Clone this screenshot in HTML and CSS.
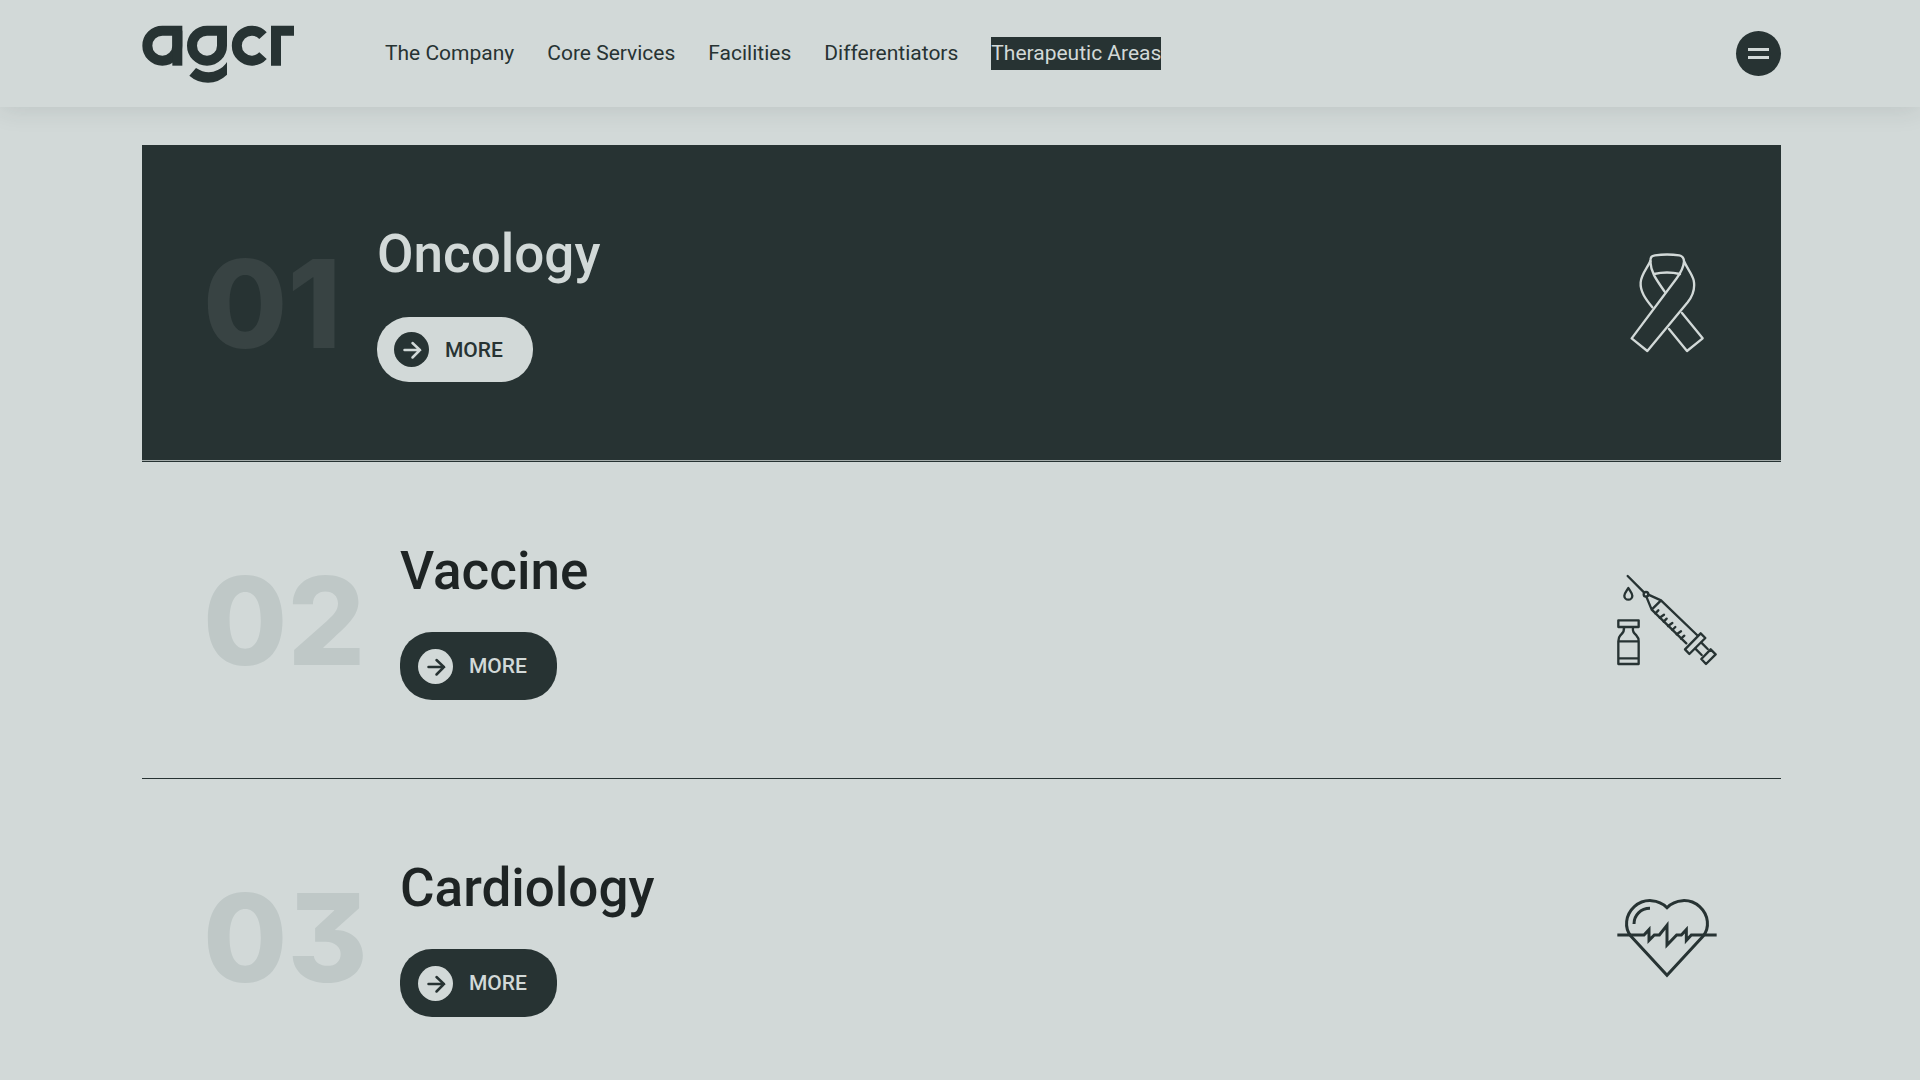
FILE: index.html
```html
<!DOCTYPE html>
<html lang="en">
<head>
<meta charset="utf-8">
<meta name="viewport" content="width=device-width, initial-scale=1">
<title>agcr - Therapeutic Areas</title>
<link rel="stylesheet" href="styles.css">
</head>
<body>

<header class="header">
  <a class="logo" href="#" aria-label="agcr">
    <svg viewBox="36 44 456 172" width="152" height="58" fill="none" stroke="currentColor" stroke-width="30">
      <path d="M97 60A45 45 0 0 0 97 150A45 45 0 0 0 142 105V60Z"/>
      <path d="M142 60V165"/>
      <path d="M231 60A45 45 0 0 0 231 150A45 45 0 0 0 276 105V60Z"/>
      <path d="M198 172Q232 194 263 178Q281 170 291 154V192Q266 216 234 216Q202 216 178 195Z" fill="currentColor" stroke="none"/>
      <path d="M399 75A45 45 0 1 0 399 135"/>
      <path d="M438 165V60H492"/>
    </svg>
  </a>
  <nav class="nav">
    <a href="#">The Company</a>
    <a href="#">Core Services</a>
    <a href="#">Facilities</a>
    <a href="#">Differentiators</a>
    <a href="#" class="active">Therapeutic Areas</a>
  </nav>
  <button class="menu" type="button" aria-label="Menu"><span></span><span></span></button>
</header>

<main class="areas">
  <section class="area active">
    <span class="number">01</span>
    <div class="info">
      <h2>Oncology</h2>
      <a class="more" href="#">
        <svg class="arrow" viewBox="0 0 35 35"><circle cx="17.5" cy="17.5" r="17.5"/><path d="M10.5 18H26M18.5 11L26 18L18.5 25.5"/></svg>
        MORE
      </a>
    </div>
    <svg class="icon light" viewBox="50 40 300 300">
      <path d="M150 66C150 51 154 49 164 47Q200 42 237 47C247 49 251 54 251 66C249 88 241 100 228 117L94 296L141 334L262 188C280 165 285 147 280 122C275 102 261 88 251 64"/>
      <path d="M150 64C142 84 123 103 121 128C119 155 135 177 156 203"/>
      <path d="M150 66C152 100 169 121 193 156M161 103Q200 94 239 103"/>
      <path d="M245 220L307 296L260 334L206 268"/>
    </svg>
  </section>

  <section class="area">
    <span class="number">02</span>
    <div class="info">
      <h2>Vaccine</h2>
      <a class="more" href="#">
        <svg class="arrow" viewBox="0 0 35 35"><circle cx="17.5" cy="17.5" r="17.5"/><path d="M10.5 18H26M18.5 11L26 18L18.5 25.5"/></svg>
        MORE
      </a>
    </div>
    <svg class="icon" viewBox="50 30 300 300">
      <path d="M82 48L131 97"/>
      <circle cx="137" cy="103" r="7"/>
      <path d="M144 104L182 121L290 225M138 110L154 149L258 250M182 121L154 149"/>
      <path d="M165 160L174 151M178 173L191 164M190 185L199 176M203 198L216 189M216 210L225 201M229 223L242 214M242 236L252 227"/>
      <path d="M301 220L315 234L267 282L254 268Z"/>
      <path d="M303 248L322 267M285 266L304 285M331 268L346 283L317 312L303 297Z"/>
      <path d="M84 84C78 94 72 100 72 107A12 12 0 0 0 96 107C96 100 90 94 84 84Z"/>
      <path d="M54 181H115V201H54ZM71 202C73 215 67 219 60 226C55 231 54 237 54 244V312H115V244C115 237 113 231 108 226C101 219 96 215 98 202M54 244H115M54 295H115"/>
    </svg>
  </section>

  <section class="area">
    <span class="number">03</span>
    <div class="info">
      <h2>Cardiology</h2>
      <a class="more" href="#">
        <svg class="arrow" viewBox="0 0 35 35"><circle cx="17.5" cy="17.5" r="17.5"/><path d="M10.5 18H26M18.5 11L26 18L18.5 25.5"/></svg>
        MORE
      </a>
    </div>
    <svg class="icon heart" viewBox="50 21 300 300">
      <path d="M200 83C176 58 132 53 102 80C75 105 71 143 92 169L200 286L308 169C329 143 325 105 298 80C268 53 224 58 200 83Z"/>
      <path d="M101 132C101 106 121 85 149 85"/>
      <path d="M51 165H131L146 149V181L162 165H177L200 136V195L229 165H243L258 149V181L273 165H349"/>
    </svg>
  </section>
</main>

</body>
</html>
```

FILE: styles.css
```css
:root {
  --dark: #273333;
  --light: #d2d9d8;
}

* {
  box-sizing: border-box;
}

body {
  margin: 0;
  background: var(--light);
  color: var(--dark);
  font-family: Roboto, "Liberation Sans", sans-serif;
  overflow-x: hidden;
}

a {
  color: inherit;
  text-decoration: none;
}

/* header */
.header {
  display: flex;
  align-items: center;
  height: 107px;
  padding: 0 139px 0 142px;
  box-shadow: 0 2px 24px rgba(39, 51, 51, 0.12);
}

.logo svg {
  display: block;
}

.nav {
  display: flex;
  gap: 33px;
  margin-left: 91px;
  font-size: 21px;
  line-height: 33px;
}

.nav .active {
  background: var(--dark);
  color: var(--light);
}

.menu {
  display: flex;
  flex-direction: column;
  align-items: center;
  justify-content: center;
  gap: 5px;
  width: 45px;
  height: 45px;
  margin-left: auto;
  padding: 0;
  border: 0;
  border-radius: 50%;
  background: var(--dark);
  cursor: pointer;
}

.menu span {
  width: 21px;
  height: 3px;
  background: var(--light);
}

/* list of areas */
.areas {
  padding: 38px 139px 0 142px;
}

.area {
  display: flex;
  align-items: center;
  min-height: 317px;
  padding: 0 64px 0 61px;
  border-bottom: 1px solid var(--dark);
}

.area.active {
  background: var(--dark);
  color: var(--light);
  box-shadow: inset 0 -1px #a5adac;
}

.number {
  width: 197px;
  padding-top: 2px;
  font-family: Inter, sans-serif;
  font-size: 122px;
  font-weight: 800;
  line-height: 150px;
  font-feature-settings: "cv09";
  color: #bfc8c7;
}

.active .number {
  width: 174px;
  color: #384343;
}

.info h2 {
  margin: 0;
  padding: 1px 0 31px;
  font-size: 53px;
  font-weight: 500;
  line-height: 60px;
  color: #1e2424;
}

.active .info h2 {
  color: var(--light);
}

.more {
  display: inline-flex;
  vertical-align: top;
  align-items: center;
  gap: 16px;
  height: 68px;
  padding: 0 30px 0 18px;
  border-radius: 32px;
  background: var(--dark);
  color: var(--light);
  font-size: 21px;
  font-weight: 500;
}

.active .more {
  height: 65px;
  margin: 2px 0 1px;
  padding-left: 17px;
  background: var(--light);
  color: var(--dark);
}

.arrow {
  width: 35px;
  height: 35px;
  fill: var(--light);
}

.arrow path {
  fill: none;
  stroke: var(--dark);
  stroke-width: 2.5;
  stroke-linecap: round;
}

.active .arrow {
  fill: var(--dark);
}

.active .arrow path {
  stroke: var(--light);
}

.icon {
  width: 100px;
  height: 100px;
  margin-left: auto;
  fill: none;
  stroke: var(--dark);
  stroke-width: 7;
  stroke-linecap: round;
  stroke-linejoin: round;
}

.icon.light {
  stroke: var(--light);
}

.icon.heart {
  stroke-width: 9;
  stroke-linecap: butt;
  stroke-linejoin: miter;
}
```
